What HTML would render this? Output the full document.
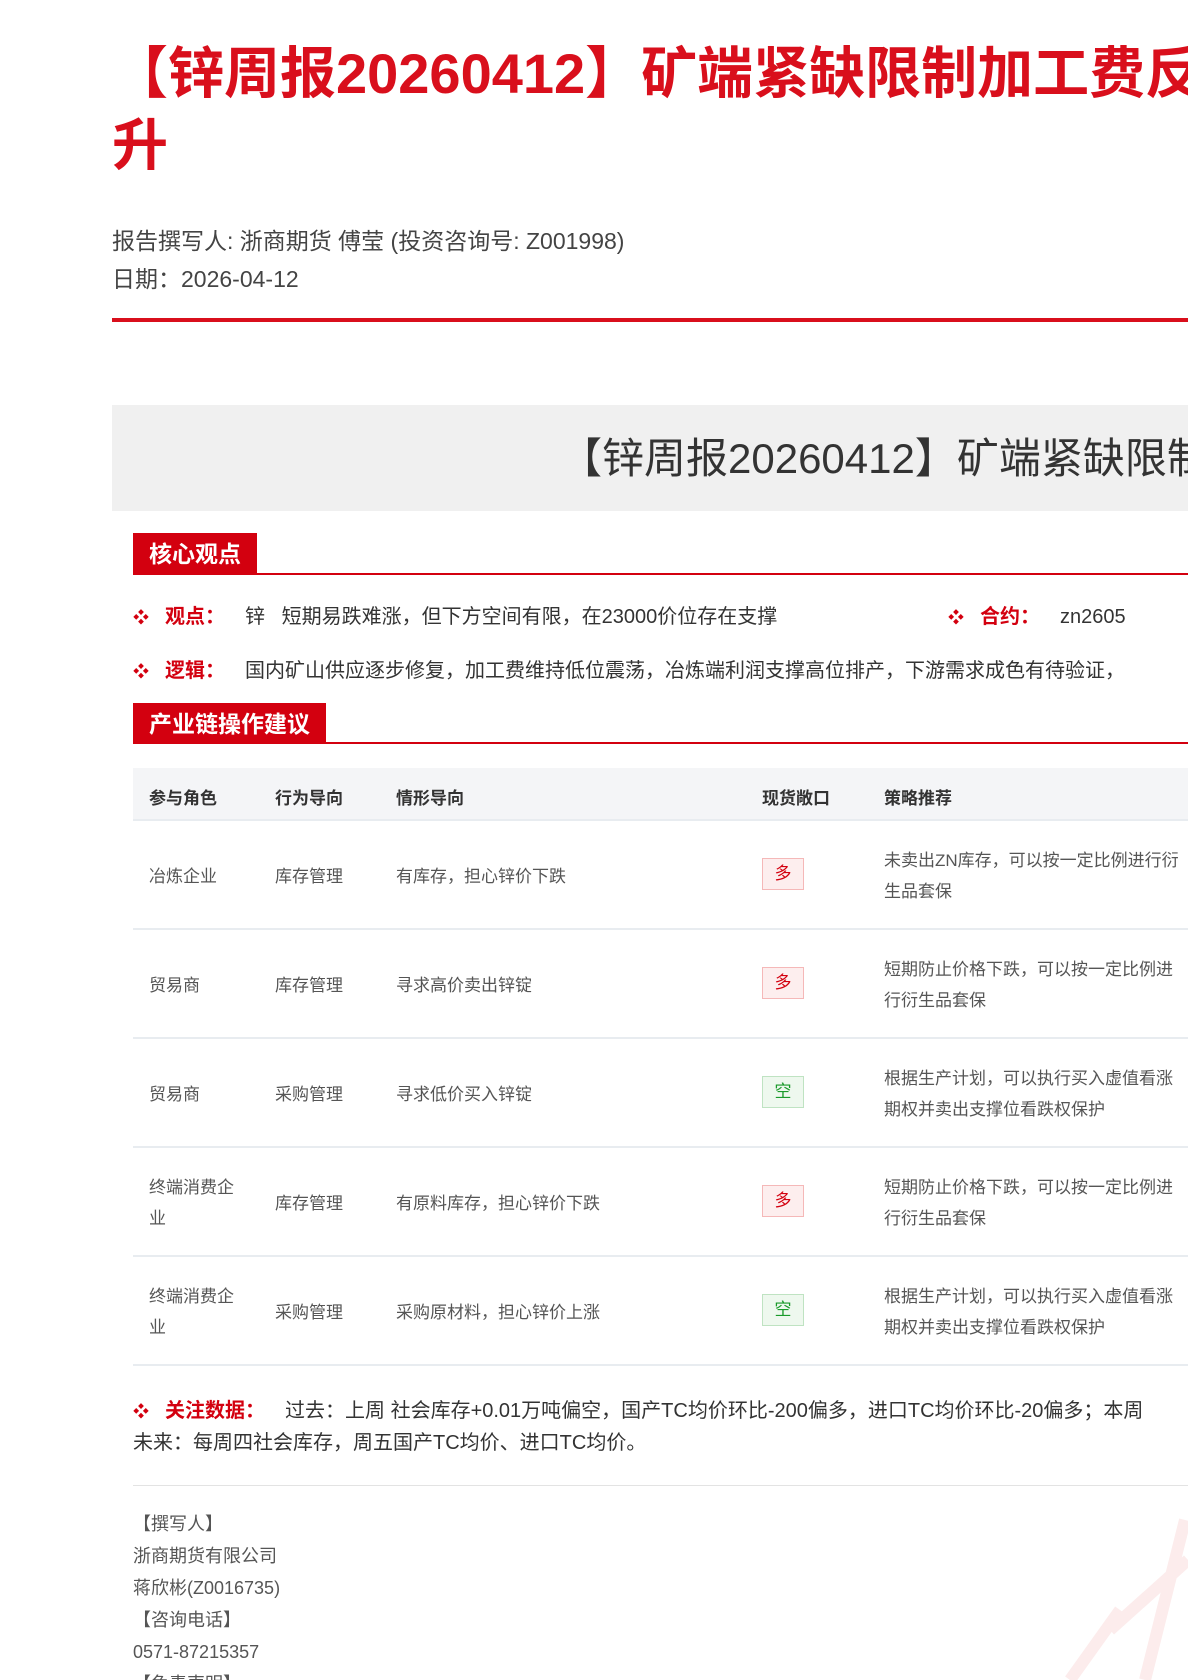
<!DOCTYPE html>
<html><head><meta charset="utf-8"><style>
*{margin:0;padding:0;box-sizing:border-box}
html,body{width:1188px;height:1680px;overflow:hidden;background:#fff}
body{position:relative;font-family:"Liberation Sans","Noto Sans CJK SC",sans-serif;color:#333}
.a{position:absolute;white-space:nowrap}
.title{left:112px;top:38px;font-size:56px;font-weight:bold;color:#d90f1c;line-height:72px;letter-spacing:0}
.meta{left:112px;font-size:23px;color:#444}
.redline{left:112px;top:318px;width:1076px;height:4px;background:#d90f1c}
.gray{left:112px;top:405px;width:1076px;height:106px;background:#f0f0f0}
.sec{background:#d3000f;color:#fff;font-size:23px;font-weight:bold;height:40px;line-height:42px;padding:0 16px}
.secline{left:133px;width:1055px;height:2px;background:#d3000f}
.b{font-size:20px;color:#333}
.b .k{color:#d3000f;font-weight:bold;margin:0 20px 0 16px}
.dot{color:#d3000f;font-size:16px}
.th{font-size:17px;font-weight:bold;color:#333}
.td{font-size:17px;color:#555;line-height:31px}
.hl{left:133px;width:1055px;height:2px;background:#e8ecf0}
.badge{width:42px;height:32px;line-height:30px;text-align:center;font-size:17px;border:1px solid}
.red{color:#d3000f;background:#fdeeee;border-color:#f5b8b8}
.grn{color:#1a9a2a;background:#eef8ee;border-color:#bfe3c2}
.f{font-size:18px;color:#555;line-height:32px}
</style></head><body>
<div class="a title">【锌周报20260412】矿端紧缺限制加工费反弹<br>升</div>
<div class="a meta" style="top:222px">报告撰写人: 浙商期货 傅莹 (投资咨询号: Z001998)</div>
<div class="a meta" style="top:260px">日期：2026-04-12</div>
<div class="a redline"></div>
<div class="a gray"></div>
<div class="a" style="left:560px;top:432px;font-size:42px;color:#333;line-height:54px">【锌周报20260412】矿端紧缺限制加工费反弹</div>

<div class="a secline" style="top:573px"></div>
<div class="a sec" style="left:133px;top:533px">核心观点</div>
<div class="a b" style="left:133px;top:600px"><span class="dot">❖</span><span class="k">观点：</span>锌&nbsp;&nbsp;&nbsp;短期易跌难涨，但下方空间有限，在23000价位存在支撑</div>
<div class="a b" style="left:948px;top:600px"><span class="dot">❖</span><span class="k">合约：</span>zn2605</div>
<div class="a b" style="left:133px;top:654px"><span class="dot">❖</span><span class="k">逻辑：</span>国内矿山供应逐步修复，加工费维持低位震荡，冶炼端利润支撑高位排产，下游需求成色有待验证，</div>

<div class="a secline" style="top:742px"></div>
<div class="a sec" style="left:133px;top:703px">产业链操作建议</div>

<div class="a" style="left:133px;top:768px;width:1055px;height:52px;background:#f4f5f7"></div>
<div class="a th" style="left:149px;top:784px">参与角色</div>
<div class="a th" style="left:275px;top:784px">行为导向</div>
<div class="a th" style="left:396px;top:784px">情形导向</div>
<div class="a th" style="left:762px;top:784px">现货敞口</div>
<div class="a th" style="left:884px;top:784px">策略推荐</div>
<div class="a hl" style="top:819px"></div>

<div class="a td" style="left:149px;top:861px">冶炼企业</div>
<div class="a td" style="left:275px;top:861px">库存管理</div>
<div class="a td" style="left:396px;top:861px">有库存，担心锌价下跌</div>
<div class="a badge red" style="left:762px;top:858px">多</div>
<div class="a td" style="left:884px;top:845px">未卖出ZN库存，可以按一定比例进行衍<br>生品套保</div>
<div class="a hl" style="top:928px"></div>

<div class="a td" style="left:149px;top:970px">贸易商</div>
<div class="a td" style="left:275px;top:970px">库存管理</div>
<div class="a td" style="left:396px;top:970px">寻求高价卖出锌锭</div>
<div class="a badge red" style="left:762px;top:967px">多</div>
<div class="a td" style="left:884px;top:954px">短期防止价格下跌，可以按一定比例进<br>行衍生品套保</div>
<div class="a hl" style="top:1037px"></div>

<div class="a td" style="left:149px;top:1079px">贸易商</div>
<div class="a td" style="left:275px;top:1079px">采购管理</div>
<div class="a td" style="left:396px;top:1079px">寻求低价买入锌锭</div>
<div class="a badge grn" style="left:762px;top:1076px">空</div>
<div class="a td" style="left:884px;top:1063px">根据生产计划，可以执行买入虚值看涨<br>期权并卖出支撑位看跌权保护</div>
<div class="a hl" style="top:1146px"></div>

<div class="a td" style="left:149px;top:1172px">终端消费企<br>业</div>
<div class="a td" style="left:275px;top:1188px">库存管理</div>
<div class="a td" style="left:396px;top:1188px">有原料库存，担心锌价下跌</div>
<div class="a badge red" style="left:762px;top:1185px">多</div>
<div class="a td" style="left:884px;top:1172px">短期防止价格下跌，可以按一定比例进<br>行衍生品套保</div>
<div class="a hl" style="top:1255px"></div>

<div class="a td" style="left:149px;top:1281px">终端消费企<br>业</div>
<div class="a td" style="left:275px;top:1297px">采购管理</div>
<div class="a td" style="left:396px;top:1297px">采购原材料，担心锌价上涨</div>
<div class="a badge grn" style="left:762px;top:1294px">空</div>
<div class="a td" style="left:884px;top:1281px">根据生产计划，可以执行买入虚值看涨<br>期权并卖出支撑位看跌权保护</div>
<div class="a hl" style="top:1364px"></div>

<div class="a b" style="left:133px;top:1394px"><span class="dot">❖</span><span class="k">关注数据：</span>过去：上周 社会库存+0.01万吨偏空，国产TC均价环比-200偏多，进口TC均价环比-20偏多；本周</div>
<div class="a b" style="left:133px;top:1426px">未来：每周四社会库存，周五国产TC均价、进口TC均价。</div>
<div class="a" style="left:133px;top:1485px;width:1055px;height:1px;background:#e3e3e3"></div>

<div class="a f" style="left:133px;top:1508px">【撰写人】<br>浙商期货有限公司<br>蒋欣彬(Z0016735)<br>【咨询电话】<br>0571-87215357<br>【免责声明】</div>

<svg class="a" style="left:960px;top:1500px" width="228" height="180"><path d="M225 20 L185 180 M1090 180" stroke="#fcecec" stroke-width="12" fill="none"/><path d="M110 180 L160 110 M150 130 L228 60" stroke="#fcecec" stroke-width="12" fill="none"/></svg>
</body></html>
